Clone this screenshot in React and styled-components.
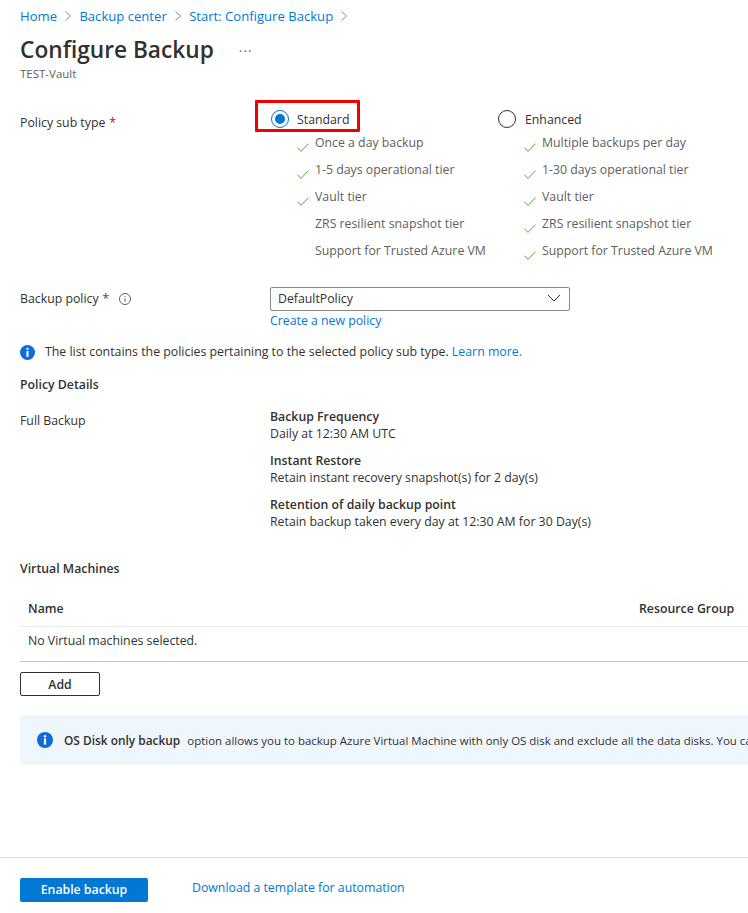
import React from "react";
import styled, { createGlobalStyle } from "styled-components";

const Global = createGlobalStyle`
  html, body { margin: 0; padding: 0; background: #fff; }
  body { font-family: "Open Sans", "Noto Sans", "Liberation Sans", sans-serif; font-size: 12.3px; color: #323130; }
  * { box-sizing: border-box; }
`;

const Page = styled.div`
  width: 748px;
  height: 913px;
  overflow: hidden;
  display: flex;
  flex-direction: column;
`;
const Main = styled.main`
  height: 857px;
  padding: 7px 0 0 20px;
`;
const Crumbs = styled.nav`
  display: flex;
  align-items: center;
  height: 18px;
  gap: 7.2px;
  font-size: 13.1px;
`;
const Link = styled.a`
  color: #0078d4;
  line-height: 18px;
`;
const Title = styled.div`
  display: flex;
  align-items: center;
  height: 30px;
  margin-top: 10px;
`;
const H1 = styled.h1`
  margin: 0;
  font-size: 22.7px;
  font-weight: 600;
  line-height: 30px;
  color: #323130;
`;
const Dots = styled.span`
  margin-left: 25px;
  font-size: 13px;
  line-height: 10px;
  letter-spacing: 1.2px;
  color: #605e5c;
  position: relative;
  top: 1px;
`;
const Sub = styled.div`
  font-size: 11.5px;
  line-height: 16px;
  margin-top: 1px;
  color: #605e5c;
`;
const FormRow = styled.div`
  display: grid;
  grid-template-columns: 250px 1fr;
`;
const PolicyRow = styled(FormRow)`
  margin-top: 18px;
`;
const Label = styled.div`
  line-height: 18px;
  padding-top: ${(p) => p.$top || 0}px;
  display: flex;
  align-items: center;
  height: ${(p) => (p.$top || 0) + 18}px;
`;
const Req = styled.span`
  color: #a4262c;
  margin-left: 4px;
`;
const Options = styled.div`
  display: flex;
`;
const OptionCol = styled.div`
  width: ${(p) => p.$w}px;
`;
const RadioHead = styled.div`
  display: flex;
  align-items: center;
  height: 32px;
  padding-top: 6px;
  width: ${(p) => (p.$boxed ? "105px" : "auto")};
  margin-left: ${(p) => (p.$boxed ? "-15px" : "0")};
  ${(p) => p.$boxed && "border: 3px solid #f00000; border-radius: 1px; padding-left: 13px;"}
`;
const Radio = styled.span`
  width: 18px;
  height: 18px;
  flex: none;
  border-radius: 50%;
  border: 1px solid ${(p) => (p.$on ? "#0078d4" : "#323130")};
  display: flex;
  align-items: center;
  justify-content: center;
  margin-right: ${(p) => (p.$on ? 8 : 9)}px;
  &::after {
    content: "";
    width: 10px;
    height: 10px;
    border-radius: 50%;
    background: ${(p) => (p.$on ? "#0078d4" : "transparent")};
  }
`;
const FeatureList = styled.ul`
  list-style: none;
  margin: 2px 0 0;
  padding: 0 0 0 ${(p) => p.$pl}px;
  display: flex;
  flex-direction: column;
`;
const Feature = styled.li`
  display: flex;
  height: 27px;
  line-height: 18px;
  color: #605e5c;
  white-space: nowrap;
`;
const CheckSlot = styled.span`
  width: 18px;
  flex: none;
  padding-top: 9px;
  display: block;
  & svg { display: block; }
`;
const PolicyBlock = styled(FormRow)`
  margin-top: 18px;
`;
const SelectBox = styled.div`
  width: 300px;
  height: 24px;
  border: 1px solid #8a8886;
  border-radius: 2px;
  display: flex;
  align-items: center;
  justify-content: space-between;
  padding: 0 8px 2px 7px;
  margin-bottom: 1px;
`;
const Hint = styled.div`
  display: flex;
  align-items: center;
  height: 18px;
  margin-top: 13px;
  gap: 10px;
  font-size: 12.35px;
`;
const Section = styled.div`
  font-weight: 600;
  line-height: 18px;
  margin-top: ${(p) => p.$top}px;
`;
const DetailsGrid = styled(FormRow)`
  margin-top: 14px;
`;
const DetailGroup = styled.div`
  margin-bottom: 10px;
  line-height: 17px;
`;
const DetailTitle = styled.div`
  font-weight: 600;
`;
const Table = styled.div`
  width: 900px;
  margin-top: 11px;
  border-bottom: 1px solid #c8c6c4;
`;
const THead = styled.div`
  display: grid;
  grid-template-columns: 611px 1fr;
  height: 38px;
  padding: 1px 0 0 8px;
  align-items: center;
  font-weight: 600;
  border-bottom: 1px solid #edebe9;
`;
const TRow = styled.div`
  height: 34px;
  padding: 5px 0 0 8px;
  line-height: 18px;
`;
const AddBtn = styled.button`
  display: block;
  width: 80px;
  height: 24px;
  margin-top: 10px;
  background: #fff;
  border: 1px solid #323130;
  border-radius: 2px;
  font: 600 12.3px "Open Sans", sans-serif;
  color: #323130;
  padding: 0;
`;
const Banner = styled.div`
  width: 900px;
  height: 50px;
  margin-top: 19px;
  background: #eff6fc;
  border-radius: 2px;
  display: flex;
  align-items: center;
  padding-left: 17px;
  white-space: nowrap;
  font-size: 11.46px;
`;
const BannerIcon = styled.span`
  display: flex;
  margin-right: 11px;
`;
const Strong = styled.strong`
  font-weight: 600;
  font-size: 11.9px;
  margin-right: 7px;
`;
const Footer = styled.footer`
  height: 56px;
  border-top: 1px solid #e1dfdd;
  padding: 20px 0 0 20px;
  display: flex;
  align-items: flex-start;
`;
const Primary = styled.button`
  width: 128px;
  height: 24px;
  background: #0078d4;
  color: #fff;
  border: none;
  border-radius: 2px;
  font: 600 12.3px "Open Sans", sans-serif;
  padding: 0 0 1px;
`;
const FooterLink = styled(Link)`
  margin-left: 44px;
  margin-top: 1px;
  font-size: 12.3px;
  line-height: 18px;
`;
const InfoOutline = styled.svg`
  margin-left: 10px;
`;

const Chevron = () => (
  <svg width="8" height="12" viewBox="0 0 8 12" fill="none" stroke="#8a8886" strokeWidth="1">
    <path d="M1.5 1.5 6.5 6 1.5 10.5" />
  </svg>
);
const Check = () => (
  <svg width="12" height="9" viewBox="0 0 12 9" fill="none" stroke="#5ca32d" strokeWidth="1">
    <path d="M.4 4.6 4 8.4 11.6.6" />
  </svg>
);
const InfoFilled = ({ size = 16 }) => (
  <svg width={size} height={size} viewBox="0 0 16 16">
    <circle cx="8" cy="8" r="8" fill="#0f6cdb" />
    <circle cx="8" cy="4.2" r="1.2" fill="#fff" />
    <rect x="6.9" y="6.4" width="2.2" height="6.2" fill="#fff" />
  </svg>
);

const standard = [
  ["Once a day backup", true],
  ["1-5 days operational tier", true],
  ["Vault tier", true],
  ["ZRS resilient snapshot tier", false],
  ["Support for Trusted Azure VM", false],
];
const enhanced = [
  "Multiple backups per day",
  "1-30 days operational tier",
  "Vault tier",
  "ZRS resilient snapshot tier",
  "Support for Trusted Azure VM",
].map((t) => [t, true]);

const Features = ({ items, pl }) => (
  <FeatureList $pl={pl}>
    {items.map(([t, ok]) => (
      <Feature key={t}>
        <CheckSlot>{ok && <Check />}</CheckSlot>
        {t}
      </Feature>
    ))}
  </FeatureList>
);

export default function App() {
  return (
    <Page>
      <Global />
      <Main>
        <Crumbs>
          <Link>Home</Link>
          <Chevron />
          <Link>Backup center</Link>
          <Chevron />
          <Link>Start: Configure Backup</Link>
          <Chevron />
        </Crumbs>
        <Title>
          <H1>Configure Backup</H1>
          <Dots>···</Dots>
        </Title>
        <Sub>TEST-Vault</Sub>
        <PolicyRow>
          <Label $top={14}>
            Policy sub type<Req>*</Req>
          </Label>
          <Options>
            <OptionCol $w={228}>
              <RadioHead $boxed>
                <Radio $on />
                Standard
              </RadioHead>
              <Features items={standard} pl={27} />
            </OptionCol>
            <OptionCol $w={240}>
              <RadioHead>
                <Radio />
                Enhanced
              </RadioHead>
              <Features items={enhanced} pl={26} />
            </OptionCol>
          </Options>
        </PolicyRow>
        <PolicyBlock>
          <Label $top={3}>
            Backup policy<Req>*</Req>
            <InfoOutline width="12" height="12" viewBox="0 0 12 12" fill="none" stroke="#605e5c">
              <circle cx="6" cy="6" r="5.5" />
              <path d="M6 5.2v3.6M6 3v1" />
            </InfoOutline>
          </Label>
          <div>
            <SelectBox>
              DefaultPolicy
              <svg width="14" height="8" viewBox="0 0 14 8" fill="none" stroke="#323130">
                <path d="M1 1 7 7 13 1" />
              </svg>
            </SelectBox>
            <Link>Create a new policy</Link>
          </div>
        </PolicyBlock>
        <Hint>
          <InfoFilled size={15} />
          <span>
            The list contains the policies pertaining to the selected policy sub type. <Link>Learn more.</Link>
          </span>
        </Hint>
        <Section $top={15}>Policy Details</Section>
        <DetailsGrid>
          <Label $top={4}>Full Backup</Label>
          <div>
            <DetailGroup>
              <DetailTitle>Backup Frequency</DetailTitle>
              Daily at 12:30 AM UTC
            </DetailGroup>
            <DetailGroup>
              <DetailTitle>Instant Restore</DetailTitle>
              Retain instant recovery snapshot(s) for 2 day(s)
            </DetailGroup>
            <DetailGroup>
              <DetailTitle>Retention of daily backup point</DetailTitle>
              Retain backup taken every day at 12:30 AM for 30 Day(s)
            </DetailGroup>
          </div>
        </DetailsGrid>
        <Section $top={20}>Virtual Machines</Section>
        <Table>
          <THead>
            <span>Name</span>
            <span>Resource Group</span>
          </THead>
          <TRow>No Virtual machines selected.</TRow>
        </Table>
        <AddBtn>Add</AddBtn>
        <Banner>
          <BannerIcon>
            <InfoFilled />
          </BannerIcon>
          <Strong>OS Disk only backup</Strong>
          option allows you to backup Azure Virtual Machine with only OS disk and exclude all the data disks. You can
        </Banner>
      </Main>
      <Footer>
        <Primary>Enable backup</Primary>
        <FooterLink>Download a template for automation</FooterLink>
      </Footer>
    </Page>
  );
}
